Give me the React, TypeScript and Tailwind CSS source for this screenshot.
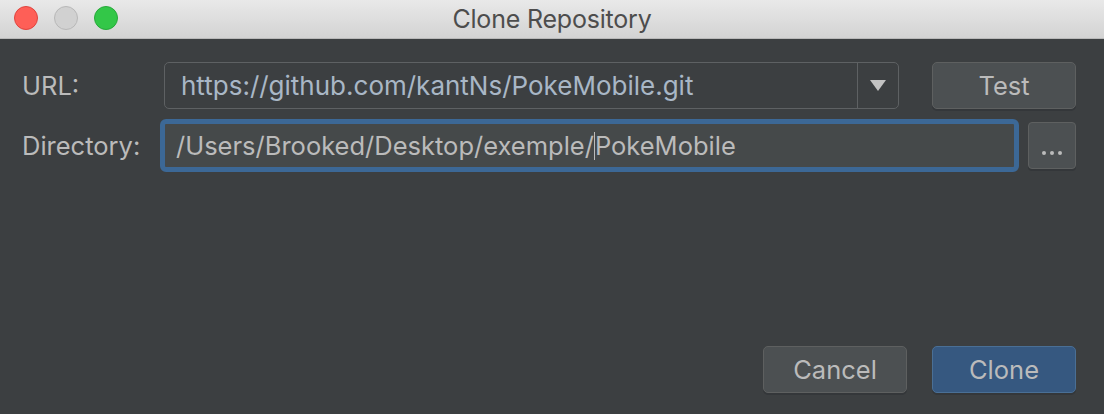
import React from "react";

export default function App() {
  return (
    <div
      className="w-[1104px] h-[414px] flex flex-col overflow-hidden"
      style={{ fontFamily: "Inter, 'Liberation Sans', sans-serif" }}
    >
      {/* Title bar */}
      <div className="relative h-[39px] flex items-center justify-center bg-gradient-to-b from-[#e9e9e9] to-[#d3d3d3] border-b border-[#b9b9b9]">
        <div className="absolute left-[14px] top-[6px] flex gap-[16px]">
          <div className="w-[24px] h-[24px] rounded-full bg-[#fe5f57] border border-[#e0443e]" />
          <div className="w-[24px] h-[24px] rounded-full bg-[#d1d1d1] border border-[#b8b8b8]" />
          <div className="w-[24px] h-[24px] rounded-full bg-[#33c748] border border-[#27a93a]" />
        </div>
        <span className="text-[25px] leading-none text-[#4d4d4d] -tracking-[0.2px]">Clone Repository</span>
      </div>

      {/* Body */}
      <div className="flex-1 bg-[#3c3f41] flex flex-col pl-[22px] pr-[28px] pt-[23px] pb-[21px]">
        <div className="flex items-center h-[47px]">
          <div className="w-[142px] text-[25.5px] leading-none text-[#bbbbbb]">URL:</div>
          <div className="flex w-[735px] h-[47px] rounded-[5px] border border-[#5e6163] bg-[#3c3f41]">
            <div className="flex-1 flex items-center pl-[16px] text-[26px] leading-none text-[#a9b7c6]">
              https://github.com/kantNs/PokeMobile.git
            </div>
            <div className="w-[41px] border-l border-[#5e6163] flex items-center justify-center">
              <svg width="16" height="11" viewBox="0 0 16 11">
                <polygon points="0,0 16,0 8,11" fill="#c3c3c3" />
              </svg>
            </div>
          </div>
          <div className="ml-[33px] w-[144px] h-[47px] rounded-[5px] border border-[#5e6060] bg-[#4c5052] shadow-[0_2px_0_#34373a] flex items-center justify-center text-[25.5px] leading-none text-[#bbbbbb]">
            Test
          </div>
        </div>

        <div className="flex items-center h-[53px] mt-[10px]">
          <div className="w-[138px] text-[25.5px] leading-none text-[#bbbbbb]">Directory:</div>
          <div className="w-[859px] h-[53px] rounded-[6px] border-[5px] border-[#3c6896] bg-[#45494a] flex items-center pl-[11px] text-[25.5px] leading-none text-[#bbbbbb]">
            <span>/Users/Brooked/Desktop/exemple/</span>
            <span className="inline-block w-[1px] h-[28px] bg-[#bbbbbb]" />
            <span>PokeMobile</span>
          </div>
          <div className="ml-[9px] w-[48px] h-[47px] rounded-[4px] border border-[#5e6060] bg-[#4c5052] shadow-[0_2px_0_#34373a] flex items-end justify-center gap-[4px] pb-[13px]">
            <span className="w-[4px] h-[4px] rounded-full bg-[#bbbbbb]" />
            <span className="w-[4px] h-[4px] rounded-full bg-[#bbbbbb]" />
            <span className="w-[4px] h-[4px] rounded-full bg-[#bbbbbb]" />
          </div>
        </div>

        <div className="flex-1" />

        <div className="flex justify-end gap-[25px]">
          <div className="w-[144px] h-[47px] rounded-[5px] border border-[#5e6060] bg-[#4c5052] shadow-[0_2px_0_#34373a] flex items-center justify-center text-[25.5px] leading-none text-[#bbbbbb]">
            Cancel
          </div>
          <div className="w-[144px] h-[47px] rounded-[5px] border border-[#4a6f95] bg-[#365880] shadow-[0_2px_0_#34373a] flex items-center justify-center text-[25.5px] leading-none text-[#bbbbbb]">
            Clone
          </div>
        </div>
      </div>
    </div>
  );
}
